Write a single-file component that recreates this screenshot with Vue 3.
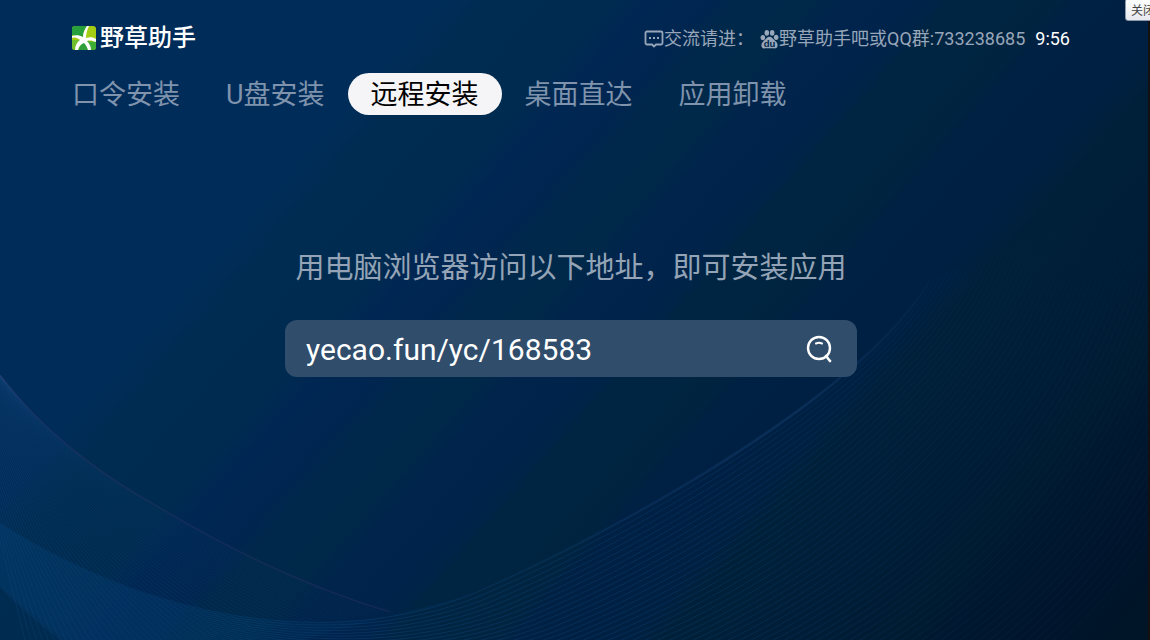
<script setup>
import { ref } from 'vue'

const tabs = ['口令安装', 'U盘安装', '远程安装', '桌面直达', '应用卸载']
const active = ref(2)
const address = ref('yecao.fun/yc/168583')

// Each ribbon is a set of curves blended between a first and a last outline.
const blend = (from, to, count) =>
  Array.from({ length: count }, (_, i) => {
    const t = i / (count - 1)
    const p = from.map((v, k) => (v + (to[k] - v) * t).toFixed(1))
    return `M${p[0]} ${p[1]}C${p.slice(2, 8).join(' ')}C${p.slice(8).join(' ')}`
  })

const wave = blend(
  [0, 523, 150, 620, 330, 650, 470, 595, 600, 540, 860, 400, 930, 280],
  [0, 587, 200, 790, 600, 840, 850, 760, 1050, 690, 1220, 560, 1300, 120],
  64
)
const veil = blend(
  [0, 375, 50, 440, 110, 480, 160, 508, 230, 550, 310, 588, 390, 612],
  [-60, 300, -40, 400, -20, 480, 0, 540, 10, 580, 20, 620, 30, 660],
  60
)
</script>

<template>
  <div class="screen">
    <svg class="backdrop" viewBox="0 0 1150 640" preserveAspectRatio="none" aria-hidden="true">
      <defs>
        <linearGradient id="night" gradientUnits="userSpaceOnUse" x1="0" y1="0" x2="960" y2="845">
          <stop offset="0" stop-color="#002c5a" />
          <stop offset=".26" stop-color="#002c59" />
          <stop offset=".29" stop-color="#002c51" />
          <stop offset=".36" stop-color="#002b50" />
          <stop offset=".38" stop-color="#002753" />
          <stop offset=".42" stop-color="#002650" />
          <stop offset=".435" stop-color="#00284a" />
          <stop offset=".48" stop-color="#002849" />
          <stop offset=".495" stop-color="#00244c" />
          <stop offset=".545" stop-color="#00234a" />
          <stop offset=".56" stop-color="#002542" />
          <stop offset=".62" stop-color="#002440" />
          <stop offset=".635" stop-color="#002044" />
          <stop offset=".70" stop-color="#002042" />
          <stop offset=".72" stop-color="#002039" />
          <stop offset=".80" stop-color="#001d37" />
          <stop offset=".86" stop-color="#001b31" />
          <stop offset=".89" stop-color="#001730" />
          <stop offset=".96" stop-color="#00142a" />
          <stop offset="1" stop-color="#001526" />
        </linearGradient>
        <linearGradient id="waveInk" gradientUnits="userSpaceOnUse" x1="0" y1="0" x2="1150" y2="0">
          <stop offset="0" stop-color="#0a4a88" stop-opacity=".22" />
          <stop offset=".2" stop-color="#0a4a80" stop-opacity=".34" />
          <stop offset=".35" stop-color="#0c4478" stop-opacity=".46" />
          <stop offset=".65" stop-color="#0b3a68" stop-opacity=".46" />
          <stop offset=".85" stop-color="#0a3055" stop-opacity=".32" />
          <stop offset="1" stop-color="#0a2a4c" stop-opacity=".25" />
        </linearGradient>
        <linearGradient id="fadeInk" gradientUnits="userSpaceOnUse" x1="0" y1="640" x2="0" y2="160">
          <stop offset="0" stop-color="#fff" />
          <stop offset=".6" stop-color="#fff" />
          <stop offset="1" stop-color="#000" />
        </linearGradient>
        <linearGradient id="veilInk" gradientUnits="userSpaceOnUse" x1="0" y1="0" x2="400" y2="0">
          <stop offset="0" stop-color="#174b82" stop-opacity=".26" />
          <stop offset="1" stop-color="#174b82" stop-opacity=".08" />
        </linearGradient>
        <linearGradient id="edgeInk" gradientUnits="userSpaceOnUse" x1="470" y1="0" x2="940" y2="0">
          <stop offset="0" stop-color="#1c477c" stop-opacity="0" />
          <stop offset=".7" stop-color="#1c477c" stop-opacity=".28" />
          <stop offset="1" stop-color="#1c477c" stop-opacity="0" />
        </linearGradient>
        <mask id="fade" maskUnits="userSpaceOnUse" x="0" y="0" width="1150" height="640">
          <rect width="1150" height="640" fill="url(#fadeInk)" />
        </mask>
      </defs>
      <rect width="1150" height="640" fill="url(#night)" />
      <path d="M0 523C150 620 330 650 470 595L300 640H65L0 587Z" fill="#003a70" fill-opacity=".2" />
      <g fill="none" stroke="url(#veilInk)">
        <path v-for="(d, i) in veil" :key="i" :d="d" />
      </g>
      <path :d="veil[0]" fill="none" stroke="#3a3568" stroke-opacity=".25" stroke-width="2" />
      <g fill="none" stroke="url(#waveInk)" mask="url(#fade)">
        <path v-for="(d, i) in wave" :key="i" :d="d" />
      </g>
      <path :d="wave[0]" fill="none" stroke="url(#edgeInk)" stroke-width="3" />
    </svg>

    <header class="top">
      <h1 class="brand">
        <svg viewBox="0 0 24 24" aria-hidden="true">
          <rect width="24" height="24" rx="3" fill="#a4cc12" />
          <path d="M3 0h12C12 4 11 7 11 11L0 9V3a3 3 0 0 1 3-3Z" fill="#27a03c" />
          <path d="M0 14l9 0-6 10a3 3 0 0 1-3-3Z" fill="#6fbe2c" />
          <path d="M14 15l10 1v5a3 3 0 0 1-3 3h-5Z" fill="#3fae34" />
          <path d="M10 16l4 0 2 8H6Z" fill="#2f9f3a" />
          <path d="M15 0C12 4 11 8 11 11C7 9 4 9 0 10v2c3-1 6 0 8 2C5 16 3 20 3 24h3c1-4 3-6 6-7c2 2 3 4 4 7h3c0-4-2-7-4-9c3-1 6 0 9 1v-3c-3-2-6-2-10-1C14 8 15 4 17 0Z" fill="#fff" />
        </svg>
        <span>野草助手</span>
      </h1>
      <div class="contact">
        <svg class="chat" viewBox="0 0 20 18" aria-hidden="true">
          <path d="M3 1.500h14a1.500 1.500 0 0 1 1.500 1.500v10a1.500 1.500 0 0 1-1.500 1.500h-5l-2 2-2-2H3A1.500 1.500 0 0 1 1.500 13V3A1.500 1.500 0 0 1 3 1.500Z" fill="none" stroke="currentColor" stroke-width="1.800" />
          <path d="M5 7h2v2H5zM9 7h2v2H9zM13 7h2v2h-2z" fill="currentColor" />
        </svg>
        <span>交流请进：</span>
        <svg class="paw" viewBox="0 0 20 20" aria-hidden="true">
          <g fill="currentColor">
            <ellipse cx="3" cy="8.500" rx="2.400" ry="2.800" />
            <ellipse cx="7.200" cy="3.500" rx="2.400" ry="3" />
            <ellipse cx="12.800" cy="3.500" rx="2.400" ry="3" />
            <ellipse cx="17" cy="8.200" rx="2.400" ry="2.800" />
            <path d="M10 7.500c2.500 0 3.500 2 5 3.500s4 3 3.500 6-2.500 3-4.500 2.800-6-.3-8 0S1.800 20 1.500 17s2-4.500 3.500-6 2.500-3.500 5-3.500Z" />
          </g>
          <text x="10" y="18" text-anchor="middle" class="du">du</text>
        </svg>
        <span>野草助手吧或QQ群:733238685</span>
        <time>9:56</time>
      </div>
    </header>

    <nav class="tabs">
      <button
        v-for="(tab, i) in tabs"
        :key="tab"
        type="button"
        :class="{ active: i === active }"
        @click="active = i"
      >{{ tab }}</button>
    </nav>

    <main class="remote">
      <label for="address">用电脑浏览器访问以下地址，即可安装应用</label>
      <div class="field">
        <input id="address" v-model="address" type="text" readonly />
        <button type="button" aria-label="搜索">
          <svg viewBox="0 0 28 28" aria-hidden="true" fill="none" stroke="#fff" stroke-linecap="round">
            <circle cx="14" cy="13" r="11" stroke-width="2.400" />
            <path d="M21 21l4 5" stroke-width="2.600" />
            <path d="M11 8.500c2-1 4-1 6 0" stroke-width="2" />
          </svg>
        </button>
      </div>
    </main>

    <div class="edge"></div>
    <button class="close" type="button">关闭</button>
  </div>
</template>

<style>
body {
  margin: 0;
  background: #002040;
}
</style>

<style scoped>
.screen {
  position: relative;
  box-sizing: border-box;
  min-height: 100vh;
  padding: 24px 80px 0 72px;
  overflow: hidden;
  font-family: Roboto, "Noto Sans CJK SC", sans-serif;
  color: #fff;
}
.backdrop {
  position: absolute;
  inset: 0;
  width: 100%;
  height: 100%;
}
.top,
.tabs,
.remote {
  position: relative;
}
.top {
  display: flex;
  align-items: center;
  justify-content: space-between;
  height: 28px;
}
.brand {
  display: flex;
  align-items: center;
  gap: 4px;
  margin: 0;
  font-size: 24px;
  font-weight: 500;
  line-height: 28px;
}
.brand svg {
  width: 24px;
  height: 24px;
}
.contact {
  display: flex;
  align-items: center;
  padding-top: 2px;
  font-size: 18px;
  line-height: 28px;
  color: #98a6b9;
  white-space: nowrap;
}
.chat {
  width: 20px;
  height: 18px;
}
.paw {
  width: 19px;
  height: 20px;
  margin-left: 6px;
}
.du {
  font: bold 10px "Liberation Sans", sans-serif;
  fill: #00264a;
}
.contact time {
  margin-left: 10px;
  color: #fff;
}
.tabs {
  display: flex;
  margin: 21px 0 0 -23px;
}
.tabs button {
  height: 42px;
  padding: 2px 23px 0;
  border: 0;
  border-radius: 21px;
  background: none;
  font: inherit;
  font-size: 27px;
  line-height: 40px;
  color: #7f93ac;
  white-space: nowrap;
}
.tabs .active {
  background: #f5f5f7;
  color: #000;
}
.remote {
  display: flex;
  flex-direction: column;
  align-items: center;
  padding-top: 133px;
}
.remote label {
  font-size: 29px;
  line-height: 40px;
  color: #94a4b6;
}
.field {
  display: flex;
  align-items: center;
  box-sizing: border-box;
  width: 100%;
  max-width: 572px;
  height: 57px;
  margin-top: 32px;
  padding: 0 24px 0 21px;
  border-radius: 12px;
  background: #304d6b;
}
.field input {
  flex: 1;
  min-width: 0;
  padding: 2px 0 0;
  border: 0;
  outline: 0;
  background: none;
  font: inherit;
  font-size: 30px;
  color: #fff;
}
.field button {
  display: flex;
  padding: 0;
  border: 0;
  background: none;
}
.field svg {
  width: 28px;
  height: 28px;
}
.edge {
  position: absolute;
  inset: 0 0 0 auto;
  width: 2px;
  background: #14100f;
}
.close {
  position: absolute;
  top: -2px;
  right: -10px;
  padding: 3px 4px 2px 5px;
  border: 1px solid #8d99a8;
  border-radius: 3px;
  background: linear-gradient(#fff, #e6e9ef);
  font: 12px/16px "Noto Sans CJK SC", sans-serif;
  color: #444;
  white-space: nowrap;
}
</style>
